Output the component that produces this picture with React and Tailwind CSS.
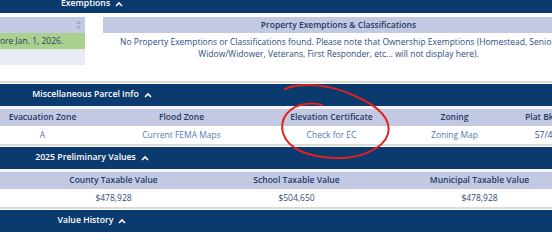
import React from 'react';

const BAR = 'bg-[#0b3a6e]';
const HEAD = 'bg-[#c3c9e3]';

function Caret() {
  return (
    <svg width="8" height="6" viewBox="0 0 8 6" className="shrink-0">
      <polyline points="1,5 4,2 7,5" fill="none" stroke="white" strokeWidth="1.6" />
    </svg>
  );
}

function SectionBar({ title }) {
  return (
    <div className={`h-[22px] ${BAR} flex items-center`}>
      <div className="w-[184px] flex justify-center items-center gap-[5px] text-white text-[8.7px] font-semibold">
        <span>{title}</span>
        <Caret />
      </div>
    </div>
  );
}

function Divider() {
  return <div className="h-[3px] border-t-2 border-[#dadada] bg-white" />;
}

const MISC = [
  { w: 'w-[85px]', head: 'Evacuation Zone', val: 'A' },
  { w: 'w-[193px]', head: 'Flood Zone', val: 'Current FEMA Maps' },
  { w: 'w-[107px]', head: 'Elevation Certificate', val: 'Check for EC' },
  { w: 'w-[139px]', head: 'Zoning', val: 'Zoning Map' },
  { w: 'w-[44px]', head: 'Plat Bk/Pg', val: '57/42', plain: true },
];

const VALUES = [
  { head: 'County Taxable Value', val: '$478,928' },
  { head: 'School Taxable Value', val: '$504,650' },
  { head: 'Municipal Taxable Value', val: '$478,928' },
];

export default function App() {
  return (
    <div className="relative w-[552px] h-[240px] overflow-hidden bg-white font-['Open_Sans',sans-serif] text-[8.5px]">
      <div className="w-[574px]">
        {/* Exemptions bar, cut at top */}
        <div className={`h-[13px] ${BAR} overflow-hidden`}>
          <div className="w-[184px] -mt-[4px] h-[16px] flex justify-center items-center gap-[5px] text-white text-[8.7px] font-semibold">
            <span>Exemptions</span>
            <Caret />
          </div>
        </div>

        <div className="flex gap-[18px] pt-[4px] h-[68px]">
          {/* left table */}
          <div className="w-[85px] overflow-hidden">
            <div className={`h-[16px] ${HEAD} flex justify-end items-center pr-[4px]`}>
              <svg width="5" height="8" viewBox="0 0 5 8">
                <polygon points="2.5,0 5,3 0,3" fill="#a3aac6" />
                <polygon points="0,5 5,5 2.5,8" fill="#a3aac6" />
              </svg>
            </div>
            <div className="h-[16px] bg-[#a9d08e] flex items-center text-[#2b3f5c] whitespace-nowrap">
              ore Jan. 1, 2026.
            </div>
            <div className="h-[16px] bg-[#e8eaf4]" />
          </div>

          {/* right panel */}
          <div className="flex-1">
            <div className={`h-[16px] ${HEAD} flex justify-center items-center text-[#1f3a63] font-semibold`}>
              Property Exemptions &amp; Classifications
            </div>
            <div className="pt-[3px] text-center leading-[12px] text-[#2c4d85] whitespace-nowrap">
              <div>No Property Exemptions or Classifications found. Please note that Ownership Exemptions (Homestead, Senior,</div>
              <div>Widow/Widower, Veterans, First Responder, etc... will not display here).</div>
            </div>
          </div>
        </div>

        {/* Misc parcel info */}
        <Divider />
        <SectionBar title="Miscellaneous Parcel Info" />
        <div className="h-[3px] bg-[#f3f4f8]" />
        <div className={`h-[17px] ${HEAD} flex text-[#1f3a63] font-semibold`}>
          {MISC.map((c) => (
            <div key={c.head} className={`${c.w} shrink-0 flex justify-center items-center whitespace-nowrap`}>{c.head}</div>
          ))}
        </div>
        <div className="h-[18px] flex">
          {MISC.map((c) => (
            <div key={c.head} className={`${c.w} shrink-0 flex justify-center items-center whitespace-nowrap ${c.plain ? 'text-[#2f4a78]' : 'text-[#4f7cb8]'}`}>{c.val}</div>
          ))}
        </div>

        {/* Preliminary values */}
        <Divider />
        <SectionBar title="2025 Preliminary Values" />
        <div className="h-[3px] bg-[#f3f4f8]" />
        <div className={`h-[17px] ${HEAD} flex pl-[22px] text-[#1f3a63] font-semibold`}>
          {VALUES.map((c) => (
            <div key={c.head} className="w-[183px] shrink-0 flex justify-center items-center whitespace-nowrap">{c.head}</div>
          ))}
        </div>
        <div className="h-[18px] flex pl-[22px] text-[#2f4a78]">
          {VALUES.map((c) => (
            <div key={c.head} className="w-[183px] shrink-0 flex justify-center items-center">{c.val}</div>
          ))}
        </div>

        <Divider />
        <SectionBar title="Value History" />
      </div>

      {/* hand-drawn annotation */}
      <svg className="absolute inset-0 pointer-events-none" width="552" height="240" viewBox="0 0 552 240">
        <path
          d="M285 89 C300 82, 330 84, 355 96 C378 106, 392 118, 388 134 C383 150, 358 159, 335 158 C310 157, 288 150, 283 133 C279 118, 290 106, 305 104 C312 103, 318 104, 322 105"
          fill="none"
          stroke="#e3201c"
          strokeWidth="2"
          strokeLinecap="round"
        />
      </svg>
    </div>
  );
}
